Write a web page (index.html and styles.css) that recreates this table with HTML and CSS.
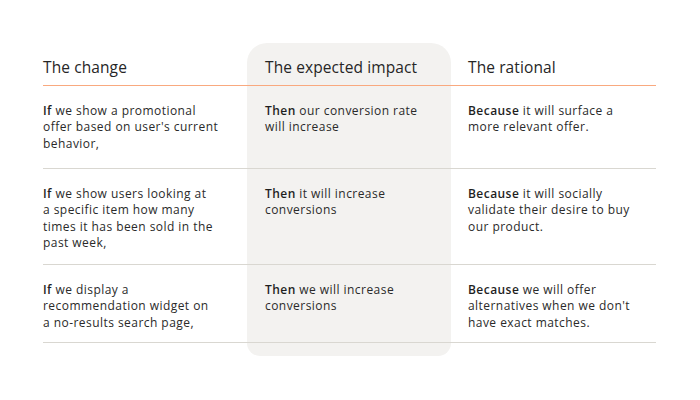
FILE: index.html
```html
<!DOCTYPE html>
<html lang="en">
<head>
<meta charset="utf-8">
<link rel="stylesheet" href="styles.css">
</head>
<body>
<div class="page">
  <div class="table">
    <div class="cell head">The change</div>
    <div class="cell head mid top">The expected impact</div>
    <div class="cell head last">The rational</div>

    <div class="cell r1"><b>If</b> we show a promotional<br>offer based on user's current<br>behavior,</div>
    <div class="cell r1 mid"><b>Then</b> our conversion rate<br>will increase</div>
    <div class="cell r1 last"><b>Because</b> it will surface a<br>more relevant offer.</div>

    <div class="cell r2"><b>If</b> we show users looking at<br>a specific item how many<br>times it has been sold in the<br>past week,</div>
    <div class="cell r2 mid"><b>Then</b> it will increase<br>conversions</div>
    <div class="cell r2 last"><b>Because</b> it will socially<br>validate their desire to buy<br>our product.</div>

    <div class="cell r3"><b>If</b> we display a<br>recommendation widget on<br>a no-results search page,</div>
    <div class="cell r3 mid"><b>Then</b> we will increase<br>conversions</div>
    <div class="cell r3 last"><b>Because</b> we will offer<br>alternatives when we don't<br>have exact matches.</div>

    <div class="foot"></div>
    <div class="foot mid bottom"></div>
    <div class="foot"></div>
  </div>
</div>
</body>
</html>
```
FILE: styles.css
```css
html, body {
  margin: 0;
  background: #ffffff;
}
body {
  font-family: "Open Sans", Lato, sans-serif;
  color: #2a2a2a;
}
.page {
  padding: 43px 44px 0 43px;
}
.table {
  display: grid;
  grid-template-columns: 204px 204px 205px;
}
.cell {
  font-size: 12px;
  letter-spacing: 0.45px;
  line-height: 16.4px;
  padding: 17px 0 16px 0;
  border-bottom: 1px solid #d9d7d1;
  white-space: nowrap;
}
.cell.r1 {
  padding-bottom: 15.8px;
}
.cell.r2 {
  padding-bottom: 12.4px;
}
.cell.r3 {
  padding-bottom: 10.8px;
}
.cell b {
  font-weight: 600;
  color: #1f1f1f;
}
.cell.mid {
  padding-left: 18px;
  background: #f3f2f0;
}
.cell.last {
  padding-left: 17px;
}
.cell.head {
  font-size: 15.5px;
  letter-spacing: 0.1px;
  line-height: 21px;
  padding-top: 14px;
  padding-bottom: 7px;
  border-bottom: 1.5px solid #f9a97f;
  color: #262626;
}
.top {
  border-radius: 20px 20px 0 0;
}
.foot {
  height: 13px;
}
.foot.mid {
  background: #f3f2f0;
}
.bottom {
  border-radius: 0 0 20px 20px;
}
```
